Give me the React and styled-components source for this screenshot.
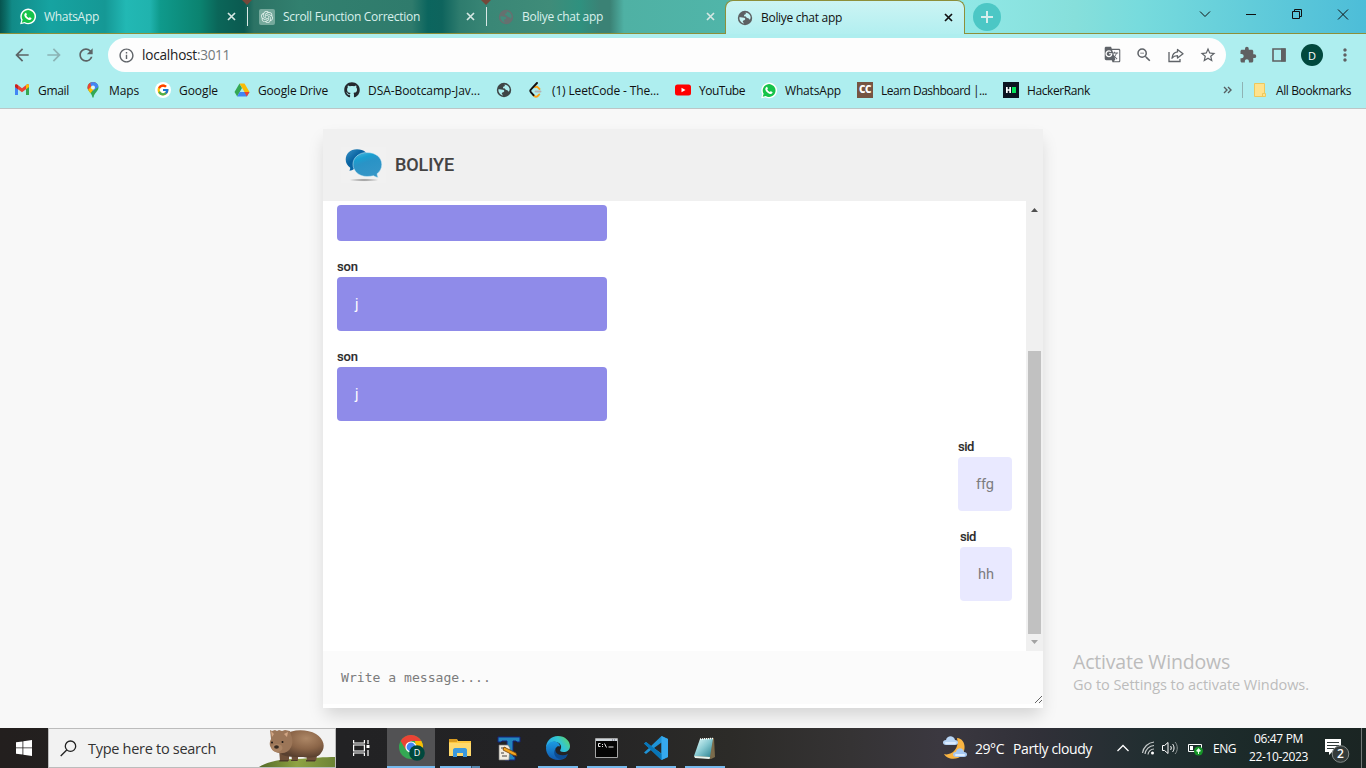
import React, { useLayoutEffect, useRef, useState } from "react";
import styled, { createGlobalStyle, css } from "styled-components";
import {
  MdArrowBack, MdArrowForward, MdRefresh, MdInfoOutline, MdGTranslate,
  MdZoomOut, MdStarBorder, MdExtension, MdMoreVert,
} from "react-icons/md";
import { FcGoogle } from "react-icons/fc";
import { FaGithub } from "react-icons/fa";
import { SiOpenai } from "react-icons/si";

const Global = createGlobalStyle`
  * { box-sizing: border-box; }
  html, body, #root { margin: 0; width: 1366px; height: 768px; overflow: hidden; }
  body { font-family: "Open Sans", "Noto Sans", sans-serif; font-size: 12px; color: #111; }
  svg { display: block; flex: none; }
`;

const Label = styled.span`
  display: inline-block;
  flex: none;
  white-space: pre;
  width: ${(p) => p.$w}px;
`;

/* Tightens or loosens letter spacing so a label fills its given width. */
function Fit({ w, children, className }) {
  const inner = useRef(null);
  const [spacing, setSpacing] = useState(0);
  useLayoutEffect(() => {
    const natural = inner.current.getBoundingClientRect().width;
    setSpacing((w - natural) / children.length);
  }, [w, children]);
  return (
    <Label $w={w} className={className}>
      <span ref={inner} style={{ letterSpacing: `${spacing}px` }}>{children}</span>
    </Label>
  );
}

const Screen = styled.div`
  width: 1366px;
  height: 768px;
  display: flex;
  flex-direction: column;
  background: #f8f8f8;
`;

/* ---------- Browser chrome ---------- */

const TabStrip = styled.header`
  height: 34px;
  display: flex;
  padding-left: 8px;
  border-bottom: 1px solid #8d8f3a;
  background: linear-gradient(90deg, #06544f 0, #0b6d68 6px, #118a87 12px, #16a3a1 50px,
    #159895 105px, #22b8b4 126px, #20b3ae 150px, #0f9a8c 160px, #0b8370 200px, #0b6659 218px,
    #0b5a50 244px, #2c7365 254px, #32806f 300px, #2f7b6c 412px, #0b655e 428px, #0e645d 442px,
    #2e7c6e 460px, #3a8776 490px, #3f8c79 550px, #2f917f 580px, #3b8275 600px, #3b8275 610px,
    #4fb1a4 624px, #50b5a9 726px, #90e8e6 965px, #86dfdb 1075px, #77dbdd 1140px, #62ccda 1250px,
    #4dbdd8 1366px);
`;

const Tab = styled.div`
  position: relative;
  width: 239px;
  height: ${(p) => (p.$active ? 34 : 33)}px;
  display: flex;
  align-items: center;
  flex: none;
  padding: 0 9px 0 12px;
  color: ${(p) => (p.$active ? "#111" : "#d9f0ec")};
  border-right: ${(p) => (p.$line ? "1px solid transparent" : "0")};
  ${(p) => p.$line && css`
    &::after {
      content: "";
      position: absolute;
      right: -2px;
      top: 7px;
      width: 1px;
      height: 19px;
      background: #d9e8e6;
    }
    &::before {
      content: "";
      position: absolute;
      right: -6px;
      top: 0;
      border: 5px solid transparent;
      border-top-color: #74483a;
      border-bottom: 0;
    }
  `}
  ${(p) => p.$active && css`
    width: 240px;
    padding: 0 10px 0 11px;
    background: linear-gradient(#ccf4f4, #b2eff0);
    border: 1px solid #8d8f3a;
    border-bottom: 0;
    border-radius: 8px 8px 0 0;
  `}
`;

const TabTitle = styled.div`
  flex: 1;
  margin-left: 8px;
  line-height: 34px;
`;

const NewTab = styled.div`
  width: 28px;
  height: 28px;
  margin: 3px 0 0 8px;
  border-radius: 50%;
  background: #4cc7c5;
  display: grid;
  place-items: center;
`;

const WindowControls = styled.div`
  margin-left: auto;
  display: flex;
  height: 28px;
  svg { width: 46px; height: 28px; }
`;

const Toolbar = styled.div`
  height: 38px;
  display: flex;
  align-items: center;
  padding: 4px 10px 0 12px;
  color: #5c6466;
  background: #aeeeef;
`;

const NavIcon = styled.span`
  width: 20px;
  margin-right: 12px;
  opacity: ${(p) => (p.$dim ? 0.42 : 1)};
`;

const Omnibox = styled.div`
  width: 1118px;
  flex: none;
  height: 34px;
  border-radius: 17px;
  background: #fdfdfd;
  display: flex;
  align-items: center;
  padding: 0 9px 0 10px;
  font-size: 13.6px;
  line-height: 18px;
  color: #222;
`;

const Url = styled.div`
  flex: 1;
  display: flex;
  margin-left: 7px;
`;
const Port = styled(Fit)`color: #72797b;`;

const OmniActions = styled.div`
  display: flex;
  gap: 14px;
  color: #5f6368;
`;

const ToolbarActions = styled.div`
  display: flex;
  align-items: center;
  gap: 12px;
  margin-left: 13px;
`;

const Avatar = styled.div`
  width: 22px;
  height: 22px;
  border-radius: 50%;
  background: #00483d;
  color: #fff;
  font-size: 11px;
  display: grid;
  place-items: center;
`;

const Bookmarks = styled.nav`
  height: 37px;
  display: flex;
  align-items: center;
  gap: 16px;
  padding: 0 15px 0 14px;
  background: #aeeeef;
  border-bottom: 1px solid #bcc5c6;
`;

const Bookmark = styled.div`
  display: flex;
  align-items: center;
  gap: 8px;
`;

const BookmarkEnd = styled.div`
  display: flex;
  align-items: center;
  margin-left: auto;
`;

const Separator = styled.span`
  width: 1px;
  height: 16px;
  margin: 0 10px 0 9px;
  background: #8fb3b4;
`;

const FolderLabel = styled(Fit)`margin-left: 9px;`;

/* ---------- Page ---------- */

const Page = styled.main`
  position: relative;
  height: 619px;
  padding-top: 20px;
  overflow: hidden;
`;

const Card = styled.section`
  width: 720px;
  height: 579px;
  margin: 0 auto;
  display: flex;
  flex-direction: column;
  background: #fff;
  box-shadow: 0 9px 16px -2px rgba(0, 0, 0, 0.15);
  font-family: Roboto, sans-serif;
`;

const CardHeader = styled.div`
  height: 72px;
  display: flex;
  align-items: center;
  padding-left: 18px;
  background: #f0f0f0;
`;

const BrandName = styled.h1`
  margin: 0 0 0 9px;
  font-size: 18px;
  font-weight: 500;
  line-height: 24px;
  color: #434343;
  -webkit-text-stroke: 0.1px #434343;
`;

const Body = styled.div`
  height: 450px;
  display: flex;
`;

const Thread = styled.div`
  flex: 1;
  display: flex;
  flex-direction: column;
  gap: 16px;
  padding: 4px 14px 0;
`;

const Message = styled.div`
  align-self: ${(p) => (p.$own ? "flex-end" : "flex-start")};
  display: flex;
  flex-direction: column;
`;

const Author = styled.div`
  height: 20px;
  line-height: 19px;
  font-size: 13px;
  font-weight: 500;
  color: #2c2c2c;
  -webkit-text-stroke: 0.1px #2c2c2c;
`;

const Bubble = styled.div`
  width: ${(p) => (p.$own ? "auto" : "270px")};
  padding: 18px;
  border-radius: 4px;
  font-size: 14.6px;
  line-height: 18px;
  color: ${(p) => (p.$own ? "#7c7c80" : "#fff")};
  background: ${(p) => (p.$own ? "#e9e9ff" : "#8f8be9")};
`;

const Scrollbar = styled.div`
  width: 17px;
  display: flex;
  flex-direction: column;
  align-items: center;
  background: #f0f0f0;
`;

const Thumb = styled.div`
  width: 13px;
  height: 283px;
  margin: 132px 0 0;
  background: #c1c1c1;
`;

const Composer = styled.textarea`
  display: block;
  width: 720px;
  height: 53px;
  padding: 18px;
  border: 0;
  outline: 0;
  overflow: hidden;
  resize: both;
  background: #fbfbfb;
  font: 13.1px/18px "DejaVu Sans Mono", monospace;
  &::placeholder { color: #7c7c7c; }
`;

const Watermark = styled.div`
  position: absolute;
  left: 1073px;
  top: 540px;
  color: #bcbcbc;
  display: flex;
  flex-direction: column;
`;
const WatermarkTitle = styled.div`font-size: 19.5px; line-height: 25px;`;
const WatermarkText = styled.div`font-size: 14.5px; line-height: 21px;`;

/* ---------- Taskbar ---------- */

const Taskbar = styled.footer`
  height: 40px;
  display: flex;
  color: #fff;
  background: linear-gradient(90deg, #231f1e 0, #222224 340px, #232325 550px, #2c2b28 730px,
    #353334 850px, #3b3840 940px, #303038 1040px, #202e30 1160px, #1b2928 1260px, #1b2523 1366px);
`;

const Start = styled.div`
  width: 48px;
  display: grid;
  place-items: center;
`;

const Search = styled.div`
  width: 288px;
  display: flex;
  align-items: center;
  padding-left: 11px;
  color: #333;
  background: #f2f2f2;
  border: 1px solid #bcbcbc;
  font-size: 14.5px;
`;
const SearchText = styled(Fit)`margin: 0 42px 0 11px;`;

const TaskItem = styled.div`
  position: relative;
  width: ${(p) => p.$w || 49}px;
  display: grid;
  place-items: center;
  background: ${(p) => (p.$active ? "#525254" : "transparent")};
  ${(p) => p.$open && css`
    &::after {
      content: "";
      position: absolute;
      left: ${p.$active ? 0 : 5}px;
      right: ${p.$active ? 0 : 4}px;
      bottom: 0;
      height: 2px;
      background: ${p.$split ? "linear-gradient(90deg, #76b9ed 31px, #3b5266 31px, #3b5266 32px, #5688af 32px)" : "#76b9ed"};
    }
  `}
`;

const Tray = styled.div`
  margin-left: auto;
  display: flex;
  align-items: center;
`;
const Weather = styled.div`
  display: flex;
  align-items: center;
  font-size: 14px;
  gap: 9px;
  margin-right: 24px;
  svg { margin-right: -2px; }
`;
const TrayIcons = styled.div`
  display: flex;
  align-items: center;
  gap: 5px;
`;
const Language = styled(Fit)`margin: 0 13px 0 7px;`;
const Clock = styled.div`
  display: flex;
  flex-direction: column;
  align-items: center;
  line-height: 18px;
  padding-bottom: 1px;
`;
const Notifications = styled.div`
  margin-left: 16px;
  width: 37px;
`;
const ShowDesktop = styled.div`
  width: 5px;
  height: 40px;
  border-left: 1px solid #727877;
`;

/* ---------- Drawings ---------- */

const WhatsAppIcon = () => (
  <svg width="16" height="17" viewBox="0 0 24 24">
    <path d="M.2 23.8 1.900 17.600A11.800 11.800 0 1 1 6.600 22.300Z" fill="#fff" />
    <path d="M2.600 21.500 4 17a9.600 9.600 0 1 1 3.200 3.200Z" fill="#16c34a" />
    <path d="M8.200 6.600c.6-.2 1-.1 1.300.5l.8 1.900c.2.6-.9 1.300-.8 1.800.7 1.600 2 2.700 3.700 3.400.6.1 1.100-1.200 1.700-1l2.100 1c.5.300.3 1.200 0 1.700-.8 1.300-2.300 1.600-3.600 1.200-3.200-1-5.700-3.400-6.800-6.300-.5-1.700.3-3.500 1.600-4.200Z" fill="#fff" />
  </svg>
);

/* A dark disc with two light land masses. */
const GlobeIcon = ({ color, land }) => (
  <svg width="16" height="16" viewBox="0 0 16 16">
    <circle cx="8" cy="8" r="7.200" fill={color} />
    <path d="M2.400 7.300c1.600-.5 3 .3 4.600.4 1.200.2 1.600 1.300.9 2-.9.700-2 .5-2.100 1.700-.1 1 1.200 1 1.100 2.200C4.500 13 2.200 10.800 2.400 7.300Z" fill={land} />
    <path d="M8.600 2.500c2.400.2 4.400 1.800 4.900 4.100.3 1.600-.2 2.500-.9 3.200-.6-.9-1-1.700-2.200-1.700-1 0-.9-1-1.700-1.500-.8-.4-1.900-.3-1.700-1.300.1-1 1.700-.6 1.900-1.500.1-.5-.4-.8-.3-1.300Z" fill={land} />
  </svg>
);

const Cross = ({ color }) => (
  <svg width="11" height="11" viewBox="0 0 11 11" stroke={color} strokeWidth="1.7">
    <path d="m2 2 7 7m0-7-7 7" />
  </svg>
);

const ChatGptIcon = () => (
  <svg width="16" height="16" viewBox="0 0 16 16">
    <rect width="16" height="16" rx="2" fill="#75a99c" />
    <g transform="translate(2 2)"><SiOpenai size={12} color="#e5f4ef" /></g>
  </svg>
);

const GmailIcon = () => (
  <svg width="16" height="16" viewBox="0 0 16 16">
    <path d="M1 4v9h3V6.500Z" fill="#4285f4" />
    <path d="M15 4v9h-3V6.500Z" fill="#34a853" />
    <path d="M1 5V3.500C1 2.300 2.300 2 3.200 2.600L8 6.200l4.800-3.600c.9-.6 2.200-.3 2.200.9V5L8 10.200Z" fill="#ea4335" />
    <path d="M12 3.200v4L15 5V3.500c0-1.200-1.300-1.500-2.200-.9Z" fill="#fbbc04" />
    <path d="M1 3.500V5l3 2.200v-4C2.600 2.100 1 2.200 1 3.500Z" fill="#c5221f" />
  </svg>
);

const MapsIcon = () => (
  <svg width="16" height="16" viewBox="0 0 16 16">
    <defs><clipPath id="pin"><path d="M8 0a5.500 5.500 0 0 0-5.500 5.500C2.500 9.500 7 10.500 7.400 15.500h1.200C9 10.500 13.500 9.500 13.500 5.500A5.500 5.500 0 0 0 8 0Z" /></clipPath></defs>
    <g clipPath="url(#pin)">
      <path d="M0 0h16v16H0Z" fill="#34a853" />
      <path d="M0 11 12 0H0Z" fill="#ea4335" />
      <path d="M5 0h11v3L8 9 6 4Z" fill="#4285f4" />
      <path d="m2 9 4.500-5L9 7l-5 6Z" fill="#fbbc04" />
    </g>
    <circle cx="8" cy="5.500" r="2" fill="#d9f7f8" />
  </svg>
);

const GoogleIcon = () => (
  <svg width="16" height="16" viewBox="0 0 16 16">
    <circle cx="8" cy="8" r="8" fill="#fff" />
    <g transform="translate(1.500 1.500)"><FcGoogle size={13} /></g>
  </svg>
);

const DriveIcon = () => (
  <svg width="16" height="16" viewBox="0 0 16 16">
    <path d="M5.500 1.500 8 6 3.200 14.500 .5 10Z" fill="#34a853" />
    <path d="M5.500 1.500h5L15.500 10h-5Z" fill="#fbbc04" />
    <path d="M5.600 10h9.900l-2.700 4.500H3.200Z" fill="#4285f4" />
    <path d="m12.800 14.500-2.500-4.500h5.200Z" fill="#ea4335" />
  </svg>
);

const LeetCodeIcon = () => (
  <svg width="16" height="16" viewBox="0 0 16 16" fill="none" strokeWidth="1.900" strokeLinecap="round">
    <path d="m5.300 13 1 1c1 1 2.400 1 3.400 0l1.600-1.600M7 5.200l1-.4c.7-.2 1.300 0 1.800.5L11.500 7" stroke="#ffa116" />
    <path d="M9 1 3 7.300c-1 1-1 2 0 3l2.500 2.900" stroke="#111" />
    <path d="M7.500 9.500h5" stroke="#b3b3b3" />
  </svg>
);

const YouTubeIcon = () => (
  <svg width="16" height="16" viewBox="0 0 16 16">
    <rect y="2.500" width="16" height="11" rx="2.500" fill="#f00" />
    <path d="m6.500 5.700 4 2.300-4 2.300Z" fill="#fff" />
  </svg>
);

const Square = styled.span`
  width: 16px;
  height: 16px;
  text-align: center;
  letter-spacing: -0.5px;
  background: ${(p) => p.$bg};
  color: #fff;
  font: 800 10px/15px "Open Sans", sans-serif;
`;

const HackerRankIcon = () => (
  <svg width="16" height="16" viewBox="0 0 16 16">
    <path d="M0 0h16v16H0Z" fill="#0b1320" />
    <path d="M3 5h1.700v2.200h1.600V5H8v6H6.300V8.700H4.700V11H3Z" fill="#fff" />
    <path d="M9 5h4v6H9Z" fill="#05e25a" />
  </svg>
);

const ShareIcon = () => (
  <svg width="18" height="18" viewBox="0 0 18 18" fill="none" stroke="#5f6368" strokeWidth="1.300">
    <path d="M2 6v9.500h11V13" />
    <path d="M10.500 3.500 16 7.800l-5.500 4.300V9.700c-2.500 0-4 .6-5.500 2.500.3-3.300 2-5.800 5.500-6.300Z" strokeLinejoin="round" />
  </svg>
);

const SidePanelIcon = () => (
  <svg width="20" height="20" viewBox="0 0 20 20">
    <path d="M4 4h12v12H4Z" fill="none" stroke="#5f6062" strokeWidth="1.600" />
    <path d="M12 3.500h4.500v13H12Z" fill="#5f6062" />
  </svg>
);

const FolderIcon = () => (
  <svg width="14" height="16" viewBox="0 0 14 16">
    <path d="M1.500 1.500h10v10h1v3h-11Z" fill="#ffe28c" stroke="#edc85d" />
    <path d="M11.500 11.500h-2v3" stroke="#edc85d" fill="none" />
  </svg>
);

const BrandLogo = () => (
  <svg width="45" height="36" viewBox="0 0 45 36">
    <defs>
      <linearGradient id="back" x1="0" y1="0" x2="1" y2="1"><stop stopColor="#3b95c9" /><stop offset=".4" stopColor="#0862a0" /><stop offset="1" stopColor="#0a6eb0" /></linearGradient>
      <linearGradient id="front" x1="0" y1="0" x2=".4" y2="1"><stop stopColor="#56b9dd" /><stop offset=".3" stopColor="#1a9fd0" /><stop offset=".5" stopColor="#2a93c6" /><stop offset="1" stopColor="#3496c7" /></linearGradient>
      <radialGradient id="shade"><stop stopColor="#888" /><stop offset="1" stopColor="#f0f0f0" /></radialGradient>
    </defs>
    <path d="M0 0h45v36H0Z" fill="#f1f1f1" />
    <ellipse cx="23" cy="33" rx="15" ry="1.600" fill="url(#shade)" />
    <path d="M16 2.200C9 2.200 4.700 7 4.700 12.500c0 3.500 1.500 6 4.500 8.200 0 1.300-.3 2-.8 3 2 0 3.200-.8 4.500-1.700C26 23 28.500 17 28 12 27.500 6 23 2.200 16 2.200Z" fill="url(#back)" />
    <path d="M26 5.500c-8 0-14 5-14 11.800S18 29.500 26 29.500c2.500 0 4.600-.3 6.600-.8 1.200.9 2.600 1.500 4.600 1.500-.8-1.100-1.200-2.300-1.100-3.500 3-2.300 4.700-5.500 4.700-9.300 0-7-6.400-11.900-14.800-11.900Z" fill="url(#front)" stroke="#d5edf6" strokeWidth=".5" />
  </svg>
);

const Wombat = () => (
  <svg width="77" height="38" viewBox="0 0 77 38">
    <defs>
      <radialGradient id="fur" cx=".6" cy=".3" r=".7"><stop stopColor="#ad8766" /><stop offset=".55" stopColor="#8b6548" /><stop offset="1" stopColor="#59402f" /></radialGradient>
      <linearGradient id="grass" x2="1"><stop stopColor="#536a27" /><stop offset=".5" stopColor="#8fa343" /><stop offset="1" stopColor="#6d8435" /></linearGradient>
    </defs>
    <path d="M1 38c9-6 24-8 38-8 15-1 28-2 38-2v10Z" fill="url(#grass)" />
    <path d="M21 20h10v12h-9Zm27 1h12l-2 11h-9Zm-15 0h7v11h-6Z" fill="#6e4f38" />
    <path d="M26 6C34 0 49 0 58 5c8 5 10 13 5 19-3 5-11 5-18 4-11 0-22 0-23-5Z" fill="url(#fur)" />
    <path d="m12 1 2 1 3-1 2 1 2-1 3 1 3-1 5 1 1 4c3 6 1 13-3 16-4 3-10 3-14 0-5-4-5-8-3-12Z" fill="#9c7658" />
    <path d="m13 2 3 3-2 3Zm17 1-4 2 3 3Z" fill="#d2a684" />
    <ellipse cx="19" cy="19" rx="5.500" ry="4" fill="#ab8464" />
    <ellipse cx="18.500" cy="18" rx="2.400" ry="1.800" fill="#352920" />
    <circle cx="14" cy="13.500" r="1" fill="#1d1714" /><circle cx="24.500" cy="13" r="1" fill="#1d1714" />
    <path d="M22 31h8v1.500h-9Zm11 0h6v1h-6Zm15 0h9v1.500H48Z" fill="#4e3a2a" />
  </svg>
);

const ChromeIcon = () => (
  <svg width="28" height="26" viewBox="0 0 28 26">
    <circle cx="14" cy="12" r="12" fill="#34a853" />
    <path d="M3.600 6A12 12 0 0 1 24.400 6H14Z" fill="#ea4335" />
    <path d="M3.600 6 9 15l5-9 4-1-5-4Z" fill="#ea4335" />
    <path d="M24.400 6A12 12 0 0 1 14 24l5.200-9L18 6Z" fill="#fbbc04" />
    <circle cx="14" cy="12" r="5.600" fill="#fff" /><circle cx="14" cy="12" r="4.400" fill="#4285f4" />
    <circle cx="20" cy="18" r="7.800" fill="#00483d" />
    <text x="20" y="21.300" fill="#fff" fontSize="9" textAnchor="middle">D</text>
  </svg>
);

const ExplorerIcon = () => (
  <svg width="22" height="20" viewBox="0 0 22 20">
    <path d="M0 1h8l1 2h13v15H0Z" fill="#ffc83d" /><path d="M0 1h8v3H0Z" fill="#d99b20" />
    <path d="M0 5h22v13H0Z" fill="#ffd96c" />
    <path d="M4 19v-7c0-1 .8-2 2-2h10c1.200 0 2 1 2 2v7h-4v-4H8v4Z" fill="#3c99dd" />
  </svg>
);

const DesignerIcon = () => (
  <svg width="24" height="25" viewBox="0 0 24 25">
    <path d="M1 1h22v5h-3l-1-1h-3v15l2 1v3H8v-3l2-1V5H5L4 6H1Z" fill="#2386be" stroke="#14247c" />
    <path d="M2 9h9l2 3-1 12H2Z" fill="#f3eee3" stroke="#777" strokeWidth=".7" />
    <path d="M4 12h5M4 17h3M5 20h5" stroke="#443f3c" />
    <path d="m7 11 12 6 1 3-4-1L6 14Z" fill="#f3a51e" stroke="#72400c" strokeWidth=".8" />
  </svg>
);

const EdgeIcon = () => (
  <svg width="24" height="24" viewBox="0 0 24 24">
    <defs>
      <linearGradient id="edgeTop" y1=".5"><stop stopColor="#27a6e6" /><stop offset=".5" stopColor="#31c5d5" /><stop offset="1" stopColor="#66d853" /></linearGradient>
      <linearGradient id="edgeLow" x2="0" y2="1"><stop stopColor="#1b9be2" /><stop offset="1" stopColor="#1157ac" /></linearGradient>
    </defs>
    <path d="M0 12C0 5 5 0 12 0s12 5 12 10c0 4-3 6-6.500 6-3 0-4-1-3-2.500C17 9 12 5 7 6 3 7 1 10 0 12Z" fill="url(#edgeTop)" />
    <path d="M0 12c1-4 4-6.500 8-6.500 3 0 6 2 6 5-5-2-8 8 1 11 2 .5 4 0 6-1.500C19 23 15 24 12 24 5 24 0 19 0 12Z" fill="url(#edgeLow)" />
    <path d="M9 13c0 5 6 8 13 5-1 3-4 5-7 5-7 0-9-8-4-12-1 1-2 1-2 2Z" fill="#0c4b91" />
  </svg>
);

const TerminalIcon = () => (
  <svg width="23" height="20" viewBox="0 0 23 20">
    <path d="M.5.500h22v19H.500Z" fill="#050505" stroke="#a5a5a5" /><path d="M1 1h21v2H1Z" fill="#cfd5db" />
    <path d="M17 2h4" stroke="#667" strokeDasharray="1 1" />
    <path d="M5.500 5.500h-2v3h2M7.500 6v1m0 1v1m2-3.500 2 4m2-.5h5" stroke="#e8e8e8" fill="none" />
  </svg>
);

const CodeIcon = () => (
  <svg width="24" height="24" viewBox="0 0 24 24">
    <path d="M17.500 0 24 3v18l-6.500 3L7 14l-5 4-2-1.500L5 12 0 7.500 2 6l5 4Zm0 6.500L10 12l7.500 5.500Z" fill="#1f93d6" />
    <path d="M17.500 0 24 3v18l-6.500 3Z" fill="#36a9ee" />
    <path d="m0 7.500 2-1.500 15.500 12V24Z" fill="#0876b8" />
  </svg>
);

const NotepadIcon = () => (
  <svg width="23" height="23" viewBox="0 0 23 23">
    <defs><linearGradient id="note" x2="1" y2="1"><stop stopColor="#e8ffff" /><stop offset=".5" stopColor="#87c9d1" /><stop offset="1" stopColor="#27808e" /></linearGradient></defs>
    <path d="m7 2 14-1 1 19-4 2-16-2Z" fill="#7b6b4b" />
    <path d="m7 2 13-.5-3 18.500-16-1Z" fill="url(#note)" /><path d="m1 19 16 1-.5 2L2 21Z" fill="#e8f4ee" />
    <path d="m7 2 13-.5" stroke="#fff" strokeWidth="1.500" strokeDasharray="1 1" />
  </svg>
);

const WeatherIcon = () => (
  <svg width="26" height="24" viewBox="0 0 26 24">
    <path d="M15 2c10 1 10 16 1 20-6 2-12 0-14-4 6 2 16-4 13-16Z" fill="#f9b442" />
    <path d="M4 9c-4 0-4-5 0-5 1-5 8-5 9 0 4 0 4 5 0 5Z" fill="#b8d5f5" />
    <path d="M14 21c-4 0-4-5 0-5 1-5 7-5 8 0 4 0 4 5 0 5Z" fill="#a6c8f2" />
    <path d="M4 7h9m1 12h8" stroke="#dcecff" strokeWidth="2" strokeLinecap="round" />
  </svg>
);

const TABS = [
  { title: "WhatsApp", w: 55, icon: <WhatsAppIcon />, line: true },
  { title: "Scroll Function Correction", w: 137, icon: <ChatGptIcon />, line: true },
  { title: "Boliye chat app", w: 81, icon: <GlobeIcon color="#66706f" land="#438c7c" /> },
  { title: "Boliye chat app", w: 81, icon: <GlobeIcon color="#5c6062" land="#c6f3f3" />, active: true },
];

const LINKS = [
  ["Gmail", 31, <GmailIcon />],
  ["Maps", 30, <MapsIcon />],
  ["Google", 39, <GoogleIcon />],
  ["Google Drive", 70, <DriveIcon />],
  ["DSA-Bootcamp-Jav...", 112, <FaGithub size={16} color="#24292e" />],
  ["", 0, <GlobeIcon color="#3e4546" land="#aeeeef" />],
  ["(1) LeetCode - The...", 107, <LeetCodeIcon />],
  ["YouTube", 46, <YouTubeIcon />],
  ["WhatsApp", 56, <WhatsAppIcon />],
  ["Learn Dashboard |...", 106, <Square $bg="#765442">CC</Square>],
  ["HackerRank", 63, <HackerRankIcon />],
];

const MESSAGES = [
  { text: "" },
  { author: "son", aw: 21, text: "j", w: 4 },
  { author: "son", aw: 21, text: "j", w: 4 },
  { author: "sid", aw: 16, text: "ffg", w: 18, own: true },
  { author: "sid", aw: 16, text: "hh", w: 16, own: true },
];

export default function App() {
  return (
    <Screen>
      <Global />
      <TabStrip>
        {TABS.map((t, i) => (
          <Tab key={i} $line={t.line} $active={t.active}>
            {t.icon}
            <TabTitle><Fit w={t.w}>{t.title}</Fit></TabTitle>
            <Cross color={t.active ? "#111" : "#d5e7e3"} />
          </Tab>
        ))}
        <NewTab>
          <svg width="14" height="14" viewBox="0 0 14 14" stroke="#d5efed" strokeWidth="2"><path d="M7 1v12M1 7h12" /></svg>
        </NewTab>
        <WindowControls>
          <svg viewBox="0 0 46 28" fill="none" stroke="#111"><path d="m18 11.500 5 5 5-5" /></svg>
          <svg viewBox="0 0 46 28" stroke="#111"><path d="M18 14.500h10" /></svg>
          <svg viewBox="0 0 46 28" fill="none" stroke="#111"><path d="M18.500 11.500h7v7h-7ZM20.500 11V9.500h7v7H26" /></svg>
          <svg viewBox="0 0 46 28" stroke="#111"><path d="m18 9.500 10 10m0-10-10 10" /></svg>
        </WindowControls>
      </TabStrip>
      <Toolbar>
        <NavIcon><MdArrowBack size={20} /></NavIcon>
        <NavIcon $dim><MdArrowForward size={20} /></NavIcon>
        <NavIcon><MdRefresh size={20} /></NavIcon>
        <Omnibox>
          <MdInfoOutline size={17} color="#5f6368" />
          <Url><Fit w={55}>localhost</Fit><Port w={33}>:3011</Port></Url>
          <OmniActions>
            <MdGTranslate size={17} />
            <MdZoomOut size={18} />
            <ShareIcon />
            <MdStarBorder size={18} />
          </OmniActions>
        </Omnibox>
        <ToolbarActions>
          <MdExtension size={18} color="#5f6062" />
          <SidePanelIcon />
          <Avatar>D</Avatar>
          <MdMoreVert size={20} color="#5f6062" />
        </ToolbarActions>
      </Toolbar>
      <Bookmarks>
        {LINKS.map(([name, w, icon], i) => (
          <Bookmark key={i}>{icon}{name && <Fit w={w}>{name}</Fit>}</Bookmark>
        ))}
        <BookmarkEnd>
          <svg width="10" height="8" viewBox="0 0 10 8" fill="none" stroke="#555d60" strokeWidth="1.400"><path d="m1 1 3 3-3 3m4-6 3 3-3 3" /></svg>
          <Separator />
          <FolderIcon />
          <FolderLabel w={75}>All Bookmarks</FolderLabel>
        </BookmarkEnd>
      </Bookmarks>

      <Page>
        <Card>
          <CardHeader>
            <BrandLogo />
            <BrandName><Fit w={59}>BOLIYE</Fit></BrandName>
          </CardHeader>
          <Body>
            <Thread>
              {MESSAGES.map((m, i) => (
                <Message key={i} $own={m.own}>
                  {m.author && <Author><Fit w={m.aw}>{m.author}</Fit></Author>}
                  <Bubble $own={m.own}>{m.text && <Fit w={m.w}>{m.text}</Fit>}</Bubble>
                </Message>
              ))}
            </Thread>
            <Scrollbar>
              <svg width="17" height="18" viewBox="0 0 17 18"><path d="m5 11 3.500-4 3.500 4Z" fill="#505050" /></svg>
              <Thumb />
              <svg width="17" height="17" viewBox="0 0 17 17"><path d="m5 6 3.500 4L12 6Z" fill="#a3a3a3" /></svg>
            </Scrollbar>
          </Body>
          <Composer placeholder="Write a message...." />
        </Card>
        <Watermark>
          <WatermarkTitle><Fit w={157}>Activate Windows</Fit></WatermarkTitle>
          <WatermarkText><Fit w={236}>Go to Settings to activate Windows.</Fit></WatermarkText>
        </Watermark>
      </Page>

      <Taskbar>
        <Start>
          <svg width="16" height="16" viewBox="0 0 16 16" fill="#fff"><path d="m0 2.300 6.500-.9v6.100H0ZM7.300 1.300 16 0v7.500H7.300ZM0 8.300h6.500v6.300L0 13.700Zm7.300 0H16V16l-8.700-1.200Z" /></svg>
        </Start>
        <Search>
          <svg width="17" height="17" viewBox="0 0 17 17" fill="none" stroke="#222" strokeWidth="1.300"><circle cx="10.500" cy="6.200" r="5.200" /><path d="M6.700 10 .7 16" /></svg>
          <SearchText w={128}>Type here to search</SearchText>
          <Wombat />
        </Search>
        <TaskItem $w={51}>
          <svg width="17" height="16" viewBox="0 0 17 16" fill="none" stroke="#fff" strokeWidth="1.200"><path d="M.6 0v3h10.800V0M.6 5h10.800v6H.6ZM.6 16v-3h10.800v3M15 0v4m0 6v6" /><path d="M13.500 5h3v3h-3Z" fill="#fff" stroke="none" /></svg>
        </TaskItem>
        <TaskItem $w={48} $active $open><ChromeIcon /></TaskItem>
        <TaskItem $open $split><ExplorerIcon /></TaskItem>
        <TaskItem><DesignerIcon /></TaskItem>
        <TaskItem $open><EdgeIcon /></TaskItem>
        <TaskItem $open><TerminalIcon /></TaskItem>
        <TaskItem $open><CodeIcon /></TaskItem>
        <TaskItem $open><NotepadIcon /></TaskItem>
        <Tray>
          <Weather>
            <WeatherIcon />
            <Fit w={29}>29°C</Fit>
            <Fit w={79}>Partly cloudy</Fit>
          </Weather>
          <TrayIcons>
            <svg width="14" height="8" viewBox="0 0 14 8" fill="none" stroke="#fff" strokeWidth="1.300"><path d="m1.500 7 5.500-5.500L12.500 7" /></svg>
            <svg width="22" height="16" viewBox="0 0 22 16" fill="none" stroke="#c8cccc" strokeWidth="1.200"><path d="M7.500 13A13 13 0 0 1 19 2M10 14A9.500 9.500 0 0 1 19 5.500M13 14.500A6 6 0 0 1 19 9" /><circle cx="17.500" cy="13" r="1.500" fill="#fff" stroke="none" /></svg>
            <svg width="17" height="14" viewBox="0 0 17 14" fill="none" stroke="#fff"><path d="M.5 4.500h2L6 1.500v11L2.500 9.500h-2Z" /><path d="M8.500 5c1 1 1 3 0 4m2-6c2 2 2 6 0 8" /><path d="M13 1c3 3 3 9 0 12" stroke="#8b9292" /></svg>
            <svg width="22" height="16" viewBox="0 0 22 16"><path d="M4.500 4.500h13v7h-13Z" fill="none" stroke="#fff" /><path d="M6 6h3v4H6Z" fill="#fff" /><circle cx="14.500" cy="11" r="4.500" fill="#159427" /><path d="m14.500 8 2.500 3-2 1v2h-1v-2l-2-1Z" fill="#e7ffe8" /></svg>
          </TrayIcons>
          <Language w={23}>ENG</Language>
          <Clock>
            <Fit w={49}>06:47 PM</Fit>
            <Fit w={59}>22-10-2023</Fit>
          </Clock>
          <Notifications>
            <svg width="26" height="30" viewBox="0 0 26 30"><path d="M1 6h16v13H8l-3 3v-3H1Z" fill="#fff" /><path d="M3 9.500h12M3 12.500h12M3 15.500h8" stroke="#303b3a" /><circle cx="16.500" cy="21" r="8.300" fill="#343b3a" stroke="#858b8a" /><text x="16.500" y="25" fill="#fff" fontSize="12" fontWeight="600" textAnchor="middle">2</text></svg>
          </Notifications>
          <ShowDesktop />
        </Tray>
      </Taskbar>
    </Screen>
  );
}
